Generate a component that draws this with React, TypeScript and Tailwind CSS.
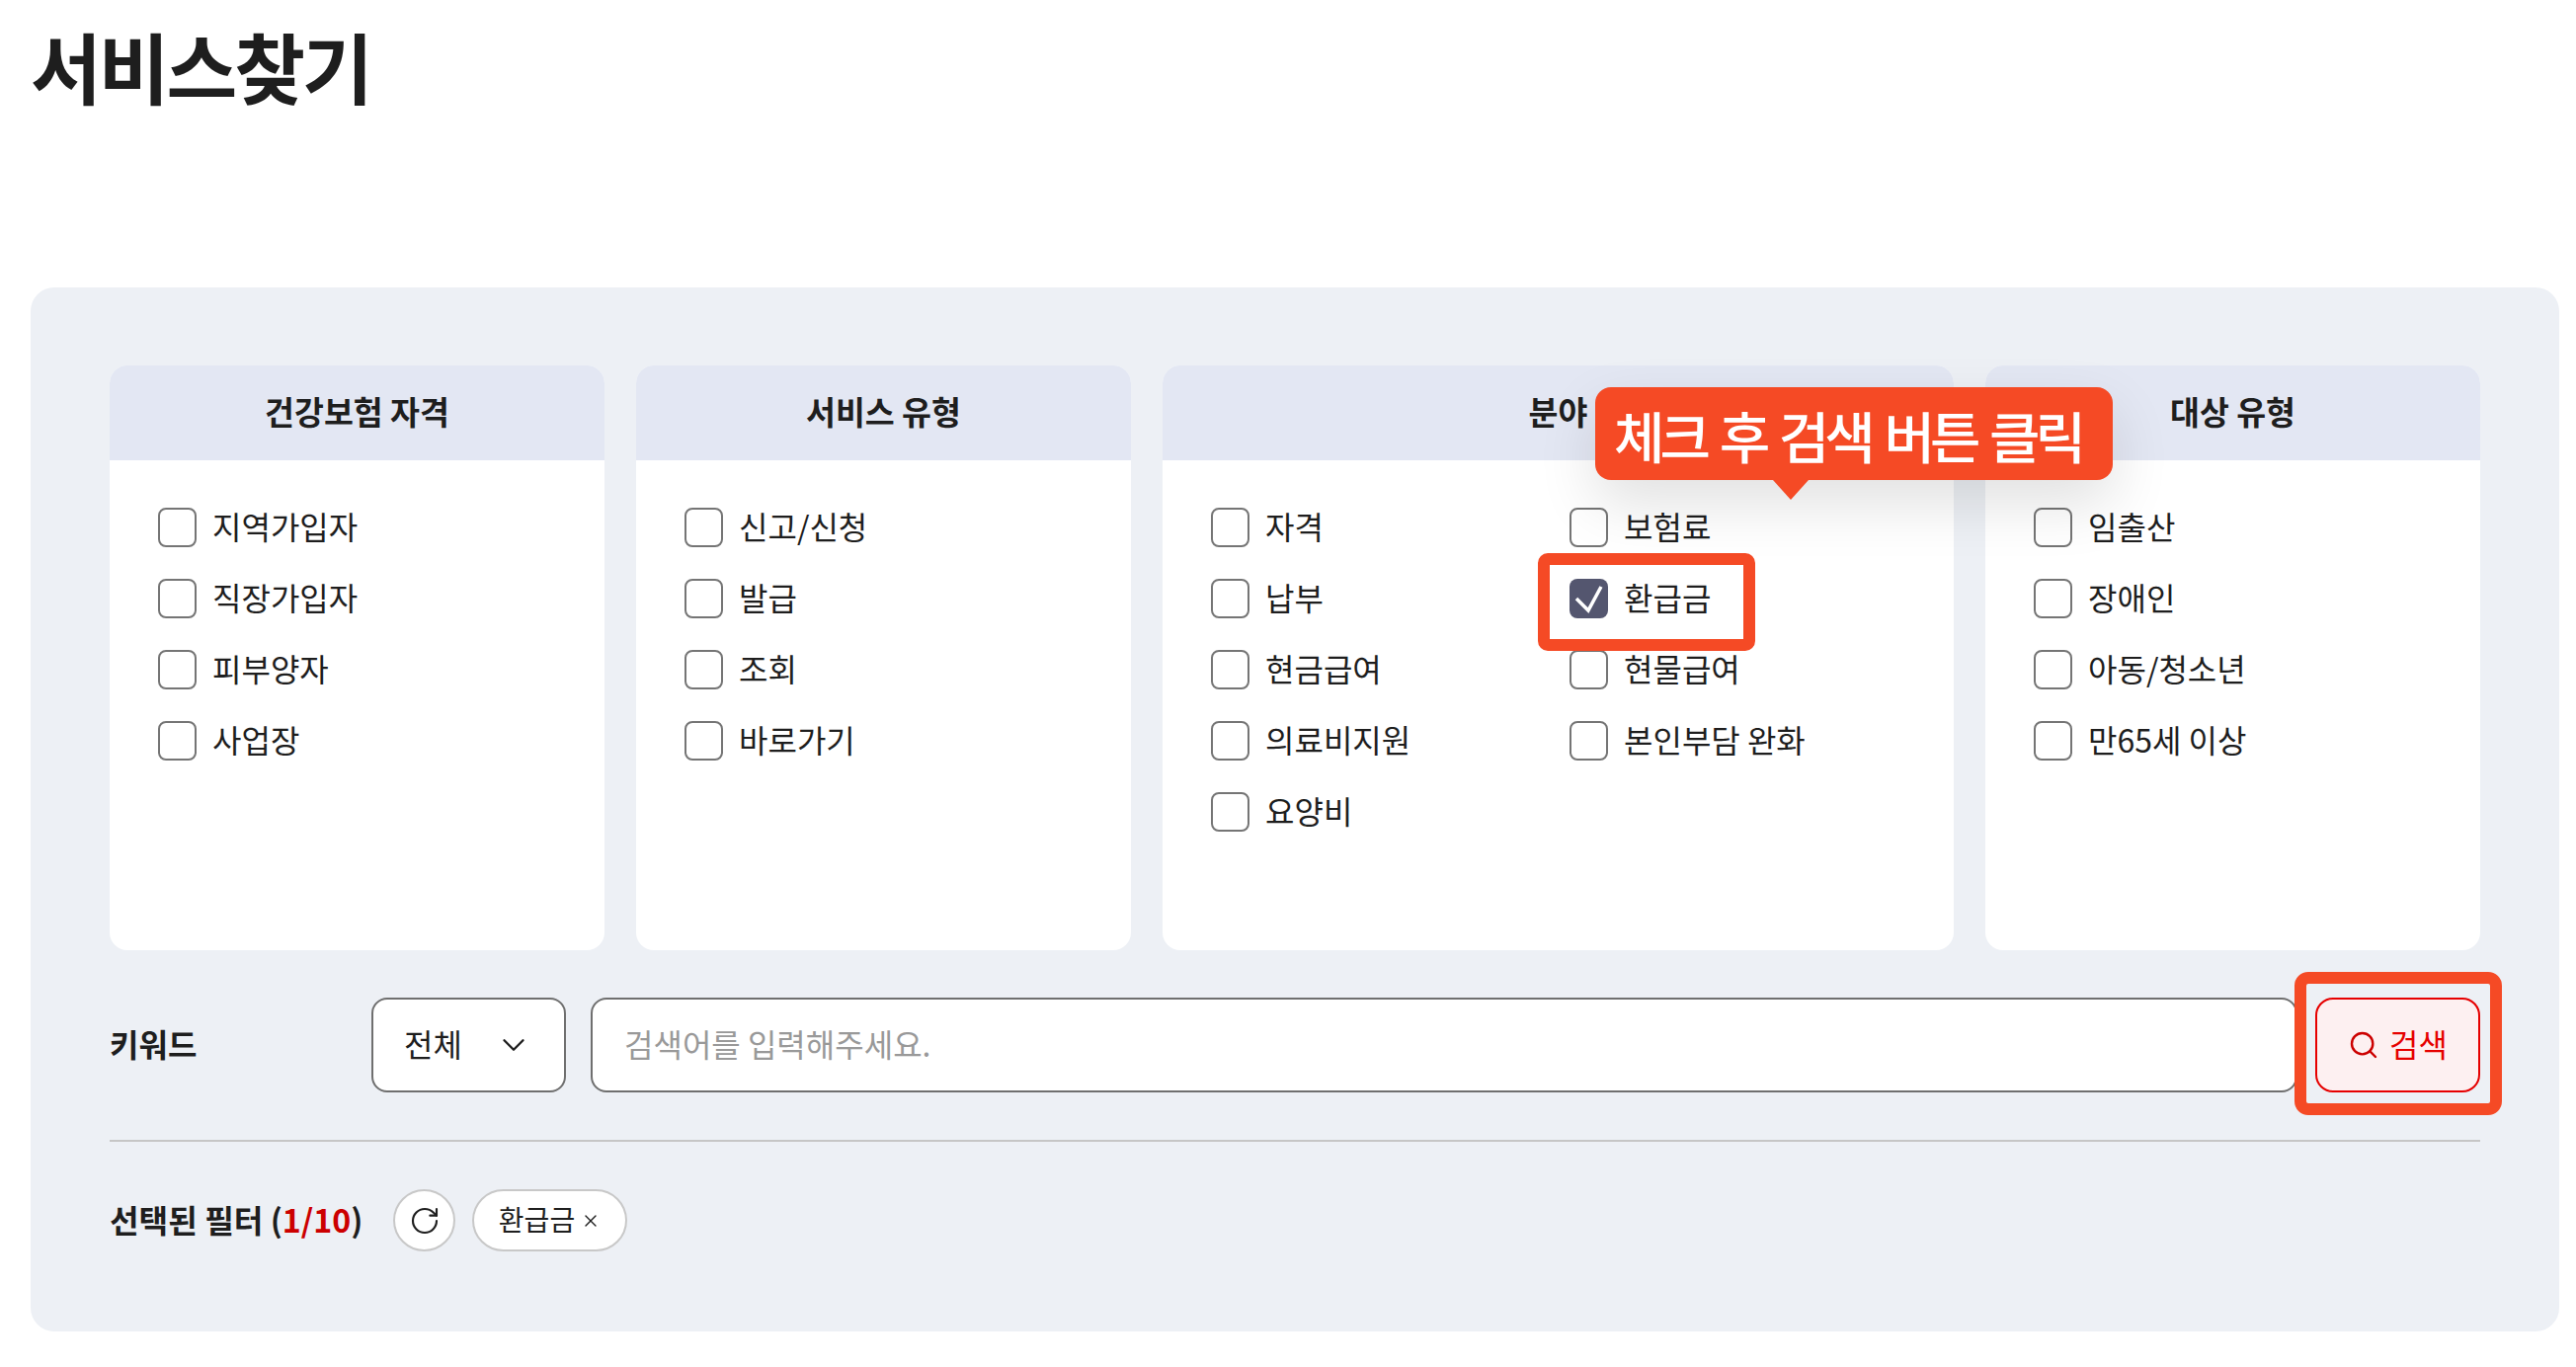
import React from 'react';
import { ChevronDown, RotateCw, Search, X } from 'lucide-react';

interface Option {
  label: string;
  checked?: boolean;
}

const qualification: Option[] = [{ label: '지역가입자' }, { label: '직장가입자' }, { label: '피부양자' }, { label: '사업장' }];
const serviceType: Option[] = [{ label: '신고/신청' }, { label: '발급' }, { label: '조회' }, { label: '바로가기' }];
const field: Option[] = [
  { label: '자격' },
  { label: '보험료' },
  { label: '납부' },
  { label: '환급금', checked: true },
  { label: '현금급여' },
  { label: '현물급여' },
  { label: '의료비지원' },
  { label: '본인부담 완화' },
  { label: '요양비' },
];
const target: Option[] = [{ label: '임출산' }, { label: '장애인' }, { label: '아동/청소년' }, { label: '만65세 이상' }];

const CheckRow: React.FC<Option> = ({ label, checked }) => (
  <label className="relative flex h-[40px] items-center gap-[16px] text-[32px] leading-[40px]">
    {checked ? (
      <span className="flex h-[40px] w-[39px] shrink-0 items-center justify-center rounded-[8px] bg-[#54566f]">
        <svg width="31" height="31" viewBox="0 0 31 31" fill="none" stroke="white" strokeWidth="3.5">
          <path d="M3 15 L15 27 L28 3" />
        </svg>
      </span>
    ) : (
      <span className="h-[40px] w-[39px] shrink-0 rounded-[8px] border-2 border-[#757575] bg-white" />
    )}
    <span className="pb-[5px]">{label}</span>
    {checked && (
      <span className="absolute left-[-32px] top-[-26px] z-10 h-[99px] w-[220px] rounded-[10px] border-[12px] border-[#f54a25]" />
    )}
  </label>
);

const Card: React.FC<{ title: string; children: React.ReactNode }> = ({ title, children }) => (
  <section className="relative h-[592px] rounded-[18px] bg-white">
    <h2 className="flex h-[96px] items-center justify-center rounded-t-[18px] bg-[#e3e7f3] pb-[3px] text-[32.5px] font-bold">{title}</h2>
    {children}
  </section>
);

export default function App() {
  return (
    <div className="min-h-[1384px] bg-white px-[31px] pt-[16px] font-['Noto_Sans_CJK_KR','Noto_Sans',sans-serif] text-[#1e1e1e]">
      <h1 className="mb-[175px] h-[100px] text-[78px] font-bold leading-[100px] tracking-[-3px]">서비스찾기</h1>

      <div className="w-[2560px] rounded-[24px] bg-[#edf0f5] px-[80px] pb-[81px] pt-[79px]">
        <div className="grid grid-cols-[501px_501px_801px_501px] gap-x-[32px]">
          <Card title="건강보험 자격">
            <div className="flex flex-col gap-y-[32px] pl-[49px] pt-[48px]">
              {qualification.map(o => <CheckRow key={o.label} {...o} />)}
            </div>
          </Card>
          <Card title="서비스 유형">
            <div className="flex flex-col gap-y-[32px] pl-[49px] pt-[48px]">
              {serviceType.map(o => <CheckRow key={o.label} {...o} />)}
            </div>
          </Card>
          <Card title="분야">
            <div className="grid grid-cols-[363px_1fr] gap-y-[32px] pl-[49px] pt-[48px]">
              {field.map(o => <CheckRow key={o.label} {...o} />)}
            </div>
            {/* 안내 말풍선 */}
            <div className="absolute left-[438px] top-[22px] z-20 flex h-[94px] w-[524px] items-center whitespace-nowrap rounded-[16px] bg-[#f54a25] pl-[19px] pt-[2px] text-[56px] font-medium tracking-[-5px] [word-spacing:6px] text-white shadow-[0_24px_60px_rgba(0,0,0,0.12)]">
              체크 후 검색 버튼 클릭
              <span className="absolute left-[180px] top-[94px] h-0 w-0 border-x-[18px] border-t-[20px] border-x-transparent border-t-[#f54a25]" />
            </div>
          </Card>
          <Card title="대상 유형">
            <div className="flex flex-col gap-y-[32px] pl-[49px] pt-[48px]">
              {target.map(o => <CheckRow key={o.label} {...o} />)}
            </div>
          </Card>
        </div>

        <div className="mt-[48px] flex h-[96px] items-center">
          <span className="w-[265px] pb-[5px] text-[32px] font-bold">키워드</span>
          <div className="flex h-full w-[197px] items-center justify-between rounded-[16px] border-2 border-[#6f6f6f] bg-white pl-[31px] pr-[32px] text-[32px]">
            <span className="pb-[5px]">전체</span>
            <ChevronDown size={38} strokeWidth={1.5} />
          </div>
          <input
            readOnly
            placeholder="검색어를 입력해주세요."
            className="ml-[25px] h-full flex-1 rounded-[16px] border-2 border-[#6f6f6f] bg-white px-[32px] pb-[5px] text-[32px] outline-none placeholder:text-[#999999]"
          />
          <div className="relative ml-[18px] h-full w-[167px]">
            <button className="flex h-full w-full items-center justify-center gap-[10px] rounded-[18px] border-2 border-[#e60000] bg-[#fdf0f1] text-[32px] text-[#e60000]">
              <Search size={32} strokeWidth={1.8} className="text-[#cc0000]" />
              <span className="pb-[5px]">검색</span>
            </button>
            <span className="absolute left-[-21px] top-[-26px] h-[145px] w-[210px] rounded-[14px] border-[12px] border-[#f54a25]" />
          </div>
        </div>

        <div className="mt-[48px] h-[2px] bg-[#c6c6c6]" />

        <div className="mt-[48px] flex h-[63px] items-center">
          <span className="w-[287px] pb-[3px] text-[32.2px] font-bold">
            선택된 필터 (<span className="text-[#cc0000]">1/10</span>)
          </span>
          <button className="flex h-[63px] w-[63px] items-center justify-center rounded-full border-2 border-[#c8c8c8] bg-white">
            <RotateCw size={32} strokeWidth={1.6} />
          </button>
          <div className="ml-[17px] flex h-[63px] w-[157px] items-center justify-center gap-[6px] rounded-full border-2 border-[#c8c8c8] bg-white text-[28px]">
            <span className="pb-[3px]">환급금</span>
            <X size={20} strokeWidth={1.6} />
          </div>
        </div>
      </div>
    </div>
  );
}
